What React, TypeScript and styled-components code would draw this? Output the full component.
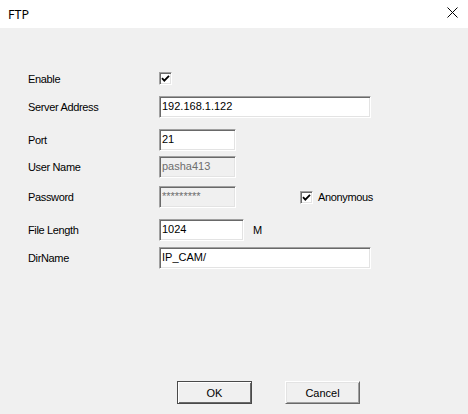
import React from "react";
import styled, { createGlobalStyle, css } from "styled-components";

const Global = createGlobalStyle`
  html, body { margin: 0; padding: 0; }
  body {
    background: #f0f0f0;
    font-family: "Liberation Sans", Arial, sans-serif;
    color: #000;
  }
`;

const Window = styled.div`
  width: 468px;
  height: 414px;
  display: flex;
  flex-direction: column;
  background: #f0f0f0;
  overflow: hidden;
`;

const TitleBar = styled.div`
  height: 28px;
  flex: none;
  background: #fff;
  display: flex;
  align-items: center;
  justify-content: space-between;
  padding: 0 10px 0 8px;
`;

const Title = styled.span`
  font-family: "Noto Sans", "Open Sans", sans-serif;
  font-size: 12.5px;
  color: #000;
`;

const CloseIcon = styled.svg`
  align-self: flex-start;
  margin-top: 7px;
  width: 11px;
  height: 11px;
`;

const Body = styled.div`
  flex: 1;
  display: flex;
  flex-direction: column;
  padding: 0 0 10px 28px;
`;

const Form = styled.div`
  display: flex;
  flex-direction: column;
  padding-top: 44px;
`;

const Row = styled.div<{ $gap: number; $h?: number }>`
  display: flex;
  align-items: center;
  height: ${(p) => p.$h ?? 22}px;
  margin-top: ${(p) => p.$gap}px;
`;

const labelText = css`
  font-size: 11px;
  letter-spacing: -0.35px;
  color: #000;
  white-space: nowrap;
`;

const Label = styled.span`
  ${labelText};
  width: 131px;
  flex: none;
`;

const sunken = css`
  box-sizing: border-box;
  border-style: solid;
  border-width: 1px;
  border-color: #a0a0a0 #fff #fff #a0a0a0;
  box-shadow: inset 1px 1px 0 #696969, inset -1px -1px 0 #e3e3e3;
`;

const Field = styled.input<{ $w: number; $disabled?: boolean }>`
  ${sunken};
  width: ${(p) => p.$w}px;
  height: 22px;
  margin: 0;
  padding: 0 1px 3px 2px;
  font-family: "Liberation Sans", Arial, sans-serif;
  font-size: 11px;
  color: ${(p) => (p.$disabled ? "#6d6d6d" : "#000")};
  background: ${(p) => (p.$disabled ? "#f0f0f0" : "#fff")};
  outline: none;
`;

const Box = styled.span`
  ${sunken};
  width: 13px;
  height: 13px;
  flex: none;
  background: #fff;
  display: inline-flex;
  align-items: center;
  justify-content: center;
`;

const CheckGroup = styled.label<{ $offset: number }>`
  ${labelText};
  display: flex;
  align-items: center;
  gap: 5px;
  margin-left: ${(p) => p.$offset}px;
`;

const Unit = styled.span`
  ${labelText};
  margin-left: 9px;
`;

const Footer = styled.div`
  margin-top: auto;
  display: flex;
  gap: 33px;
  padding-left: 149px;
`;

const Button = styled.button<{ $default?: boolean }>`
  box-sizing: border-box;
  width: 75px;
  height: 23px;
  margin: 0;
  padding: 0;
  background: #f0f0f0;
  font-family: "Liberation Sans", Arial, sans-serif;
  font-size: 11px;
  color: #000;
  border-style: solid;
  border-width: 1px;
  ${(p) =>
    p.$default
      ? css`
          border-color: #4a4a4a;
          box-shadow: inset 1px 1px 0 #fff, inset -1px -1px 0 #696969;
        `
      : css`
          border-color: #fff #696969 #696969 #fff;
          box-shadow: inset 1px 1px 0 #e3e3e3, inset -1px -1px 0 #a0a0a0;
        `}
`;

const Check = () => (
  <Box>
    <svg width="9" height="9" viewBox="0 0 9 9">
      <path d="M1 4.2 L3.3 6.6 L8 1.8" fill="none" stroke="#000" strokeWidth="1.8" />
    </svg>
  </Box>
);

export default function App() {
  return (
    <>
      <Global />
      <Window>
        <TitleBar>
          <Title>FTP</Title>
          <CloseIcon viewBox="0 0 11 11">
            <path d="M0.5 0.5 L10.5 10.5 M10.5 0.5 L0.5 10.5" stroke="#000" strokeWidth="1" fill="none" />
          </CloseIcon>
        </TitleBar>
        <Body>
          <Form>
            <Row $gap={0} $h={13}>
              <Label>Enable</Label>
              <Check />
            </Row>
            <Row $gap={11}>
              <Label>Server Address</Label>
              <Field $w={212} defaultValue="192.168.1.122" />
            </Row>
            <Row $gap={11}>
              <Label>Port</Label>
              <Field $w={77} defaultValue="21" />
            </Row>
            <Row $gap={5}>
              <Label>User Name</Label>
              <Field $w={77} $disabled readOnly defaultValue="pasha413" />
            </Row>
            <Row $gap={8}>
              <Label>Password</Label>
              <Field $w={77} $disabled readOnly defaultValue="*********" />
              <CheckGroup $offset={64}>
                <Check />
                Anonymous
              </CheckGroup>
            </Row>
            <Row $gap={11}>
              <Label>File Length</Label>
              <Field $w={85} defaultValue="1024" />
              <Unit>M</Unit>
            </Row>
            <Row $gap={6}>
              <Label>DirName</Label>
              <Field $w={212} defaultValue="IP_CAM/" />
            </Row>
          </Form>
          <Footer>
            <Button $default>OK</Button>
            <Button>Cancel</Button>
          </Footer>
        </Body>
      </Window>
    </>
  );
}
